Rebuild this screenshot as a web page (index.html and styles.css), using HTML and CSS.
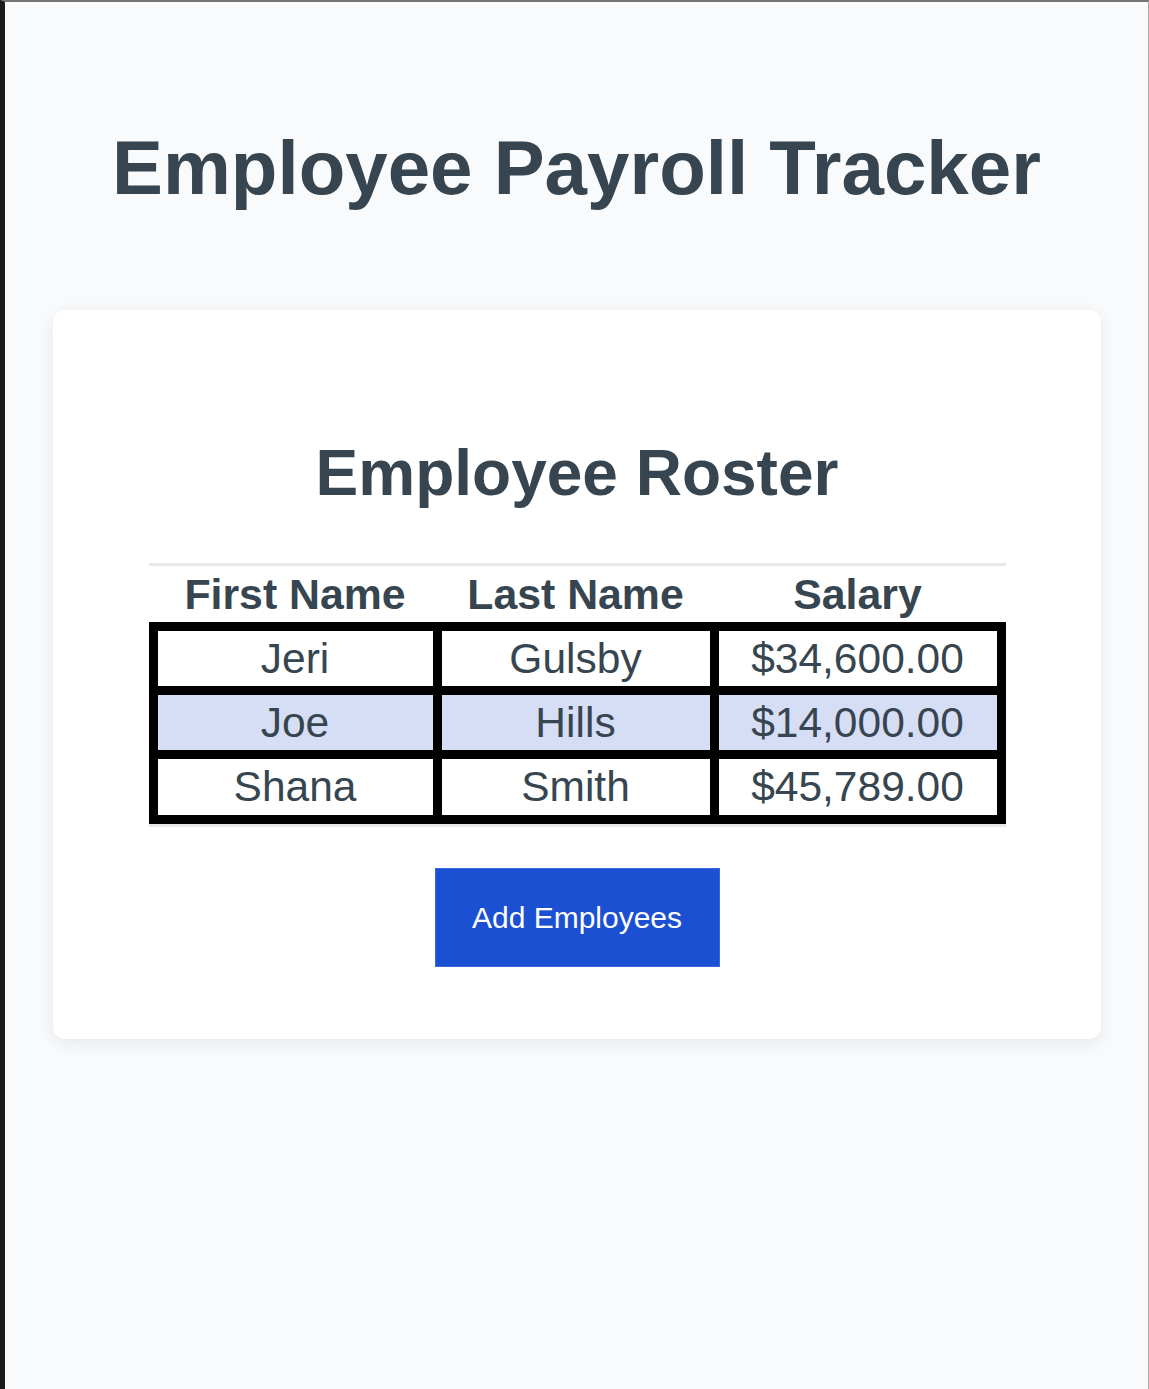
FILE: index.html
```html
<!DOCTYPE html>
<html lang="en">
<head>
<meta charset="utf-8">
<title>Employee Payroll Tracker</title>
<link rel="stylesheet" href="styles.css">
</head>
<body>
  <h1 class="title">Employee Payroll Tracker</h1>
  <main class="card">
    <h2 class="card-title">Employee Roster</h2>
    <div class="table-wrap">
      <table class="roster">
        <thead>
          <tr>
            <th class="col-first">First Name</th>
            <th class="col-last">Last Name</th>
            <th class="col-salary">Salary</th>
          </tr>
        </thead>
        <tbody>
          <tr>
            <td>Jeri</td>
            <td>Gulsby</td>
            <td>$34,600.00</td>
          </tr>
          <tr class="alt">
            <td>Joe</td>
            <td>Hills</td>
            <td>$14,000.00</td>
          </tr>
          <tr class="last">
            <td>Shana</td>
            <td>Smith</td>
            <td>$45,789.00</td>
          </tr>
        </tbody>
      </table>
    </div>
    <button class="add-btn" type="button">Add Employees</button>
  </main>
</body>
</html>
```
FILE: styles.css
```css
html {
  margin: 0;
  padding: 0;
  background: #f9fafc;
}

body {
  margin: 0;
  min-height: 100vh;
  box-sizing: border-box;
  background: #f9fafc;
  border-left: 5px solid #1b1b1b;
  border-top: 2px solid #747474;
  border-right: 1px solid #a9a9a9;
  font-family: "Liberation Sans", Arial, sans-serif;
  color: #36454f;
  padding-top: 1px;
}

.title {
  margin: 122px 0 0;
  font-size: 76.3px;
  line-height: 86px;
  font-weight: 700;
  text-align: center;
  color: #36454f;
}

.card {
  display: block;
  margin: 99px 47px 0 48px;
  padding: 126px 0 72px;
  background: #ffffff;
  border-radius: 12px;
  box-shadow: 0 4px 18px rgba(0, 0, 0, 0.08);
}

.card-title {
  margin: 0;
  font-size: 64px;
  line-height: 74px;
  font-weight: 700;
  text-align: center;
  color: #36454f;
}

.table-wrap {
  width: 857px;
  margin: 53px auto 0;
  border-top: 3px solid #e8e8e8;
  border-bottom: 3px solid #e8e8e8;
}

.roster {
  width: 857px;
  table-layout: fixed;
  border-collapse: separate;
  border-spacing: 0;
  font-size: 42.5px;
  color: #36454f;
}

.roster th {
  padding: 0 0 0 9px;
  height: 56px;
  line-height: 56px;
  font-size: 42.8px;
  font-weight: 700;
  text-align: center;
}

.col-first { width: 275px; }
.col-last { width: 268px; }
.roster th.col-salary { width: 278px; padding-right: 9px; }

.roster td {
  padding: 0;
  height: 55px;
  line-height: 55px;
  text-align: center;
  background: #ffffff;
  border-left: 9px solid #000;
  border-top: 9px solid #000;
}

.roster td:last-child {
  border-right: 9px solid #000;
}

.roster tr.last td {
  height: 56px;
  line-height: 56px;
  border-bottom: 9px solid #000;
}

.roster tr.alt td {
  background: #d6def5;
}

.add-btn {
  display: block;
  margin: 41px auto 0;
  width: 285px;
  height: 99px;
  padding: 0;
  border: 1px solid #3a68dc;
  border-radius: 0;
  background: #1c50d3;
  color: #ffffff;
  font-family: "Liberation Sans", Arial, sans-serif;
  font-size: 30px;
  cursor: pointer;
}
```
